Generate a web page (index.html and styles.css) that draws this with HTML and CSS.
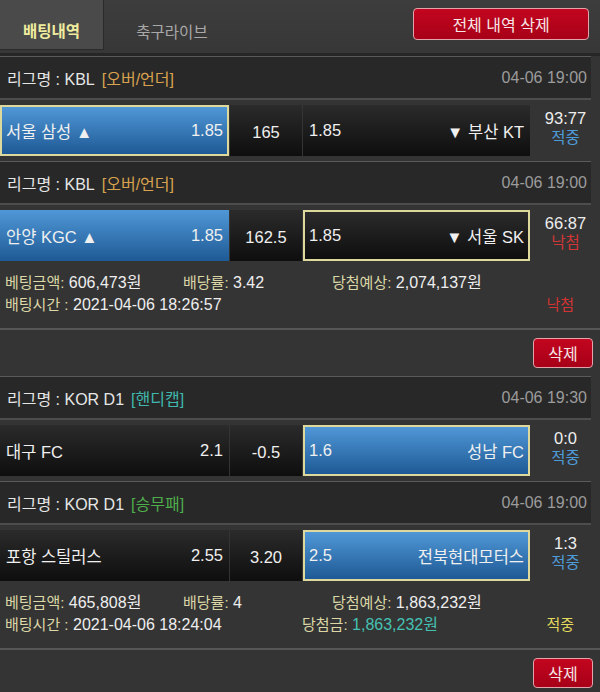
FILE: index.html
```html
<!DOCTYPE html>
<html lang="ko">
<head>
  <meta charset="UTF-8">
  <meta name="viewport" content="width=device-width, initial-scale=1.0">
  <title>배팅내역</title>
  <link rel="stylesheet" href="styles.css">
</head>
<body>
  <div class="topbar">
    <a href="#" class="tab active">배팅내역</a>
    <a href="#" class="tab live">축구라이브</a>
    <button class="btn-del btn-all">전체 내역 삭제</button>
  </div>

  <!-- bet 1 -->
  <div class="bet">
    <div class="match">
      <div class="league">
        <span>리그명 : KBL</span>
        <span class="type ou">[오버/언더]</span>
        <span class="time">04-06 19:00</span>
      </div>
      <div class="odds-row">
        <div class="cell home win pick"><span>서울 삼성 ▲</span><span>1.85</span></div>
        <div class="cell mid">165</div>
        <div class="cell away"><span>1.85</span><span>▼ 부산 KT</span></div>
        <div class="score"><span>93:77</span><span class="hit">적중</span></div>
      </div>
    </div>
    <div class="match">
      <div class="league">
        <span>리그명 : KBL</span>
        <span class="type ou">[오버/언더]</span>
        <span class="time">04-06 19:00</span>
      </div>
      <div class="odds-row">
        <div class="cell home win"><span>안양 KGC ▲</span><span>1.85</span></div>
        <div class="cell mid">162.5</div>
        <div class="cell away pick"><span>1.85</span><span>▼ 서울 SK</span></div>
        <div class="score"><span>66:87</span><span class="miss">낙첨</span></div>
      </div>
    </div>
    <div class="summary">
      <div class="sum-row">
        <span><span class="label">베팅금액:</span> 606,473원</span>
        <span><span class="label">배당률:</span> 3.42</span>
        <span><span class="label">당첨예상:</span> 2,074,137원</span>
      </div>
      <div class="sum-row second">
        <span><span class="label">배팅시간 :</span> 2021-04-06 18:26:57</span>
        <span></span>
        <span class="status miss">낙첨</span>
      </div>
    </div>
    <div class="actions"><button class="btn-del">삭제</button></div>
  </div>

  <!-- bet 2 -->
  <div class="bet">
    <div class="match">
      <div class="league">
        <span>리그명 : KOR D1</span>
        <span class="type hc">[핸디캡]</span>
        <span class="time">04-06 19:30</span>
      </div>
      <div class="odds-row">
        <div class="cell home"><span>대구 FC</span><span>2.1</span></div>
        <div class="cell mid">-0.5</div>
        <div class="cell away win pick"><span>1.6</span><span>성남 FC</span></div>
        <div class="score"><span>0:0</span><span class="hit">적중</span></div>
      </div>
    </div>
    <div class="match">
      <div class="league">
        <span>리그명 : KOR D1</span>
        <span class="type wdl">[승무패]</span>
        <span class="time">04-06 19:00</span>
      </div>
      <div class="odds-row">
        <div class="cell home"><span>포항 스틸러스</span><span>2.55</span></div>
        <div class="cell mid">3.20</div>
        <div class="cell away win pick"><span>2.5</span><span>전북현대모터스</span></div>
        <div class="score"><span>1:3</span><span class="hit">적중</span></div>
      </div>
    </div>
    <div class="summary">
      <div class="sum-row">
        <span><span class="label">베팅금액:</span> 465,808원</span>
        <span><span class="label">배당률:</span> 4</span>
        <span><span class="label">당첨예상:</span> 1,863,232원</span>
      </div>
      <div class="sum-row second">
        <span><span class="label">배팅시간 :</span> 2021-04-06 18:24:04</span>
        <span><span class="label">당첨금:</span> <span class="prize">1,863,232원</span></span>
        <span class="status won">적중</span>
      </div>
    </div>
    <div class="actions"><button class="btn-del">삭제</button></div>
  </div>
</body>
</html>
```

FILE: styles.css
```css
body {
  margin: 0;
  background: #343434;
  color: #eeeeee;
  font-family: "Liberation Sans", "Noto Sans CJK KR", sans-serif;
  font-size: 16px;
}

/* top bar */
.topbar {
  display: flex;
  align-items: flex-start;
  height: 53px;
  background: linear-gradient(#3d3d3d, #373737);
  border-bottom: 3px solid #262626;
}

.tab {
  display: flex;
  align-items: flex-end;
  justify-content: center;
  box-sizing: border-box;
  height: 50px;
  padding-bottom: 6px;
  line-height: 22px;
  font-size: 15.5px;
  color: #a8a8a8;
  text-decoration: none;
}

.tab.active {
  width: 104px;
  background: #4a4a4a;
  color: #efec9e;
  font-weight: bold;
  border-right: 1px solid #2b2b2b;
  border-bottom: 1px solid #2b2b2b;
}

.tab.live {
  width: 136px;
}

.btn-del {
  background: linear-gradient(#c3061f, #a70018);
  border: 1px solid #e3a3aa;
  border-radius: 4px;
  color: #f6e6e6;
  font-family: inherit;
  font-size: 16px;
  padding: 0;
  cursor: pointer;
}

.btn-all {
  width: 176px;
  height: 32px;
  margin: 8px 11px 0 auto;
}

/* league header */
.league {
  display: flex;
  align-items: center;
  height: 41px;
  margin-right: 9px;
  padding: 0 4px 0 7px;
  background: #282828;
  border-top: 1px solid #5a5a5a;
  border-bottom: 2px solid #4d4d4d;
  color: #e6e6e6;
}

.league .type {
  margin-left: 7px;
}

.type.ou { color: #d9a24f; }
.type.hc { color: #3fb8ae; }
.type.wdl { color: #4fae4c; }

.league .time {
  margin-left: auto;
  color: #9c9c9c;
}

/* odds row */
.odds-row {
  display: flex;
  gap: 1px;
  height: 51px;
  margin: 5px 0;
}

.cell {
  display: flex;
  align-items: center;
  justify-content: space-between;
  box-sizing: border-box;
  padding: 0 6px;
  background: linear-gradient(#2b2b2b, #0e0e0e);
  color: #f0f0f0;
  font-size: 16.5px;
}

.cell.home { width: 229px; }
.cell.away { width: 227px; }

.cell.mid {
  width: 72px;
  justify-content: center;
  padding-top: 3px;
}

.cell.win {
  background: linear-gradient(#5097d7, #1e5a95);
}

.cell.pick {
  border: 2px solid #ddd89c;
  padding: 0 4px;
}

.score {
  flex: 1;
  display: flex;
  flex-direction: column;
  align-items: center;
  justify-content: center;
  padding-bottom: 6px;
  line-height: 20px;
  font-size: 16.5px;
}

.score .hit { color: #4e9bd9; font-size: 15.5px; }
.score .miss { color: #d33636; font-size: 15.5px; }

/* summary */
.summary {
  padding: 6px 0 12px 5px;
  line-height: 22px;
}

.sum-row {
  display: grid;
  grid-template-columns: 178px 149px 1fr;
}

.sum-row.second {
  grid-template-columns: 297px 1fr auto;
}

.label { color: #dbd7a6; font-size: 15px; }
.prize { color: #45c0b2; }

.status {
  padding-right: 26px;
  font-size: 15px;
}

.status.miss { color: #d33333; }
.status.won { color: #e2d95c; }

.actions {
  display: flex;
  justify-content: flex-end;
  padding: 8px 7px;
  border-top: 2px solid #565656;
}

.actions .btn-del {
  width: 60px;
  height: 30px;
}
```
